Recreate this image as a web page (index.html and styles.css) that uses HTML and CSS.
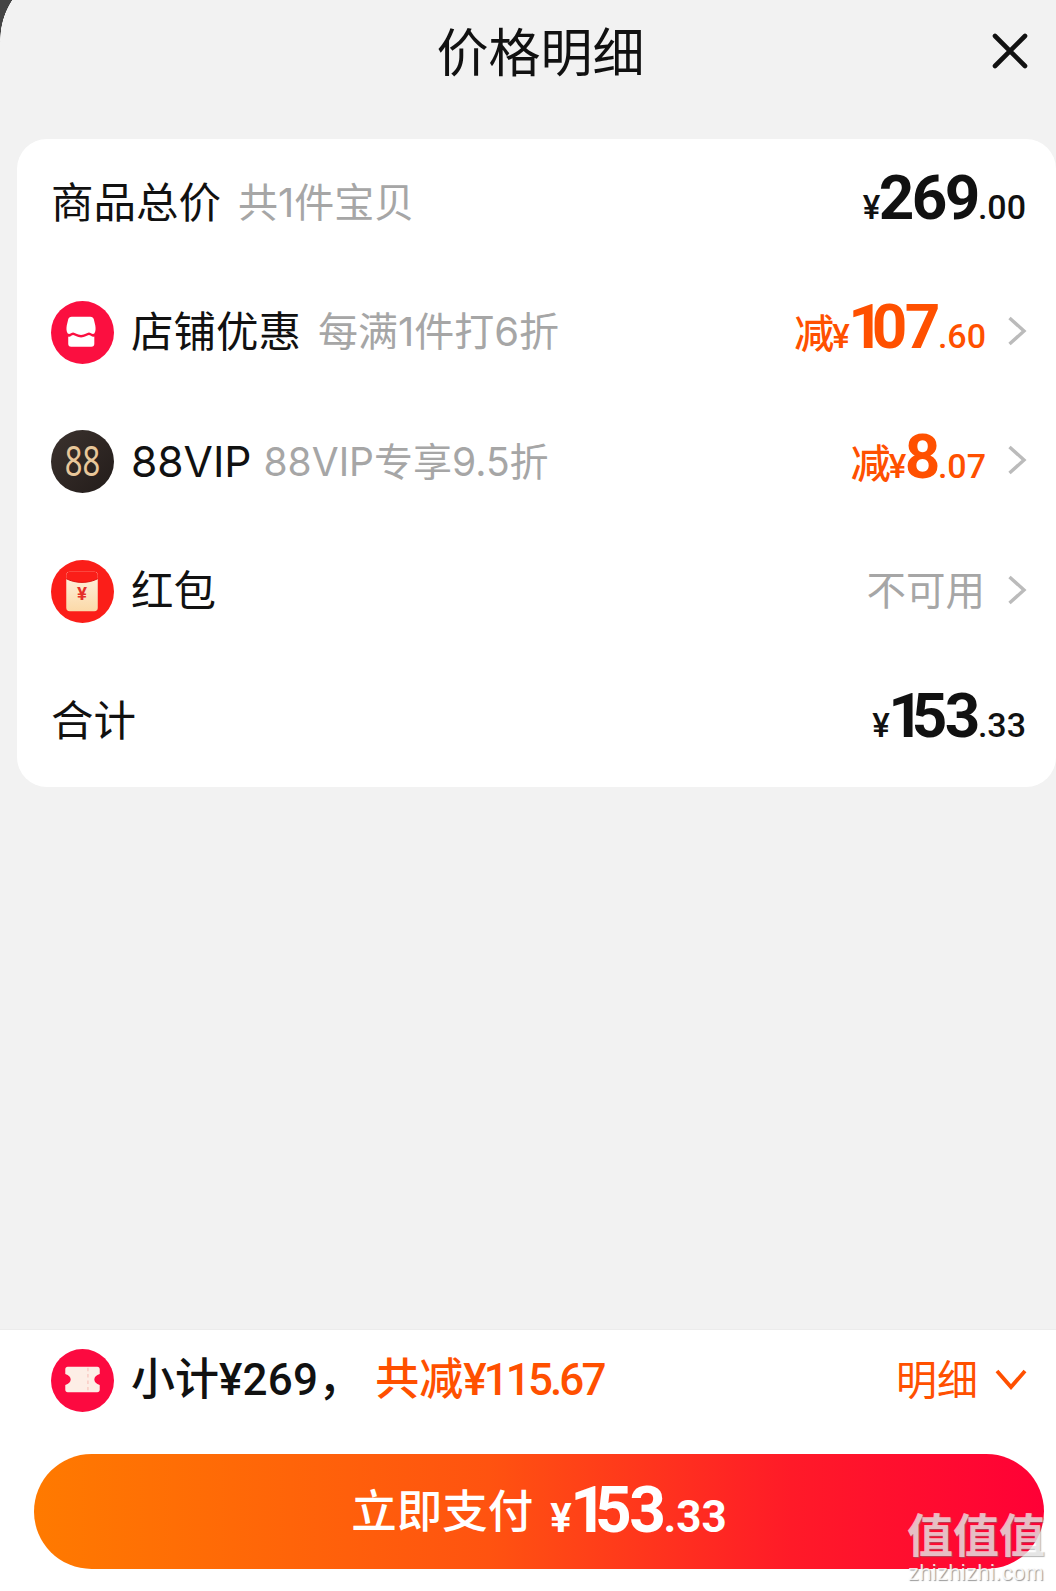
FILE: index.html
```html
<!DOCTYPE html>
<html lang="zh-CN">
<head>
    <meta charset="UTF-8">
    <meta name="viewport" content="width=device-width, initial-scale=1.0">
    <title>价格明细</title>
    <link rel="stylesheet" href="styles.css">
</head>
<body>
    <div class="sheet">
        <div class="corner"></div>

        <header class="header">
            <h1>价格明细</h1>
            <button class="close" aria-label="关闭">
                <svg width="36" height="36" viewBox="0 0 36 36"><path d="M3 3L33 33M33 3L3 33" fill="none" stroke="#111" stroke-width="4.6" stroke-linecap="round"/></svg>
            </button>
        </header>

        <main class="content">
            <section class="card">
                <div class="row">
                    <span class="name">商品总价</span>
                    <span class="note">共1件宝贝</span>
                    <span class="price"><span class="yen">¥</span><span class="int">269</span><span class="dec">.00</span></span>
                </div>

                <div class="row">
                    <svg class="icon" viewBox="0 0 64 64">
                        <circle cx="32" cy="32" r="32" fill="#fb0f40"/>
                        <path d="M21 16H40C42 16 43 17 43.500 18.500L45 25C45.500 28 45.500 31 44 33C42 34.500 40.500 32 38.500 32C36.500 32 34.500 34.500 30.500 34.500C26.500 34.500 24.500 32 22.500 32C20.500 32 19 34.500 17 33C15.500 31 15.500 28 16 25L17.500 18.500C18 17 19 16 21 16Z" fill="#fff"/>
                        <path d="M17.500 36C19.500 37 21 34.500 22.500 34.500C24.500 34.500 26.500 37 30.500 37C34.500 37 36.500 34.500 38.500 34.500C40 34.500 42 37 44 36V43.500C44 45.500 43 46.500 41 46.500H20.500C18.500 46.500 17.500 45.500 17.500 43.500Z" fill="#fff"/>
                    </svg>
                    <span class="name">店铺优惠</span>
                    <span class="note">每满1件打6折</span>
                    <span class="price price-off"><span class="off">减</span><span class="yen">¥</span><span class="int"><span class="one">1</span>07</span><span class="dec">.60</span></span>
                    <svg class="chevron" width="20" height="30" viewBox="0 0 20 30"><path d="M2.5 2L17 15L2.5 28" fill="none" stroke="#bbb" stroke-width="3.4"/></svg>
                </div>

                <div class="row">
                    <svg class="icon" viewBox="0 0 64 64">
                        <defs>
                            <linearGradient id="vipBg" x1="0" y1="0" x2="1" y2="1">
                                <stop offset="0" stop-color="#3b322e"/>
                                <stop offset="1" stop-color="#231c1a"/>
                            </linearGradient>
                        </defs>
                        <circle cx="32" cy="32" r="32" fill="url(#vipBg)"/>
                        <text class="vip-mark" x="14" y="47" textLength="36" lengthAdjust="spacingAndGlyphs">88</text>
                    </svg>
                    <span class="name">88VIP</span>
                    <span class="note note-vip">88VIP专享9.5折</span>
                    <span class="price price-off"><span class="off">减</span><span class="yen">¥</span><span class="int">8</span><span class="dec">.07</span></span>
                    <svg class="chevron" width="20" height="30" viewBox="0 0 20 30"><path d="M2.5 2L17 15L2.5 28" fill="none" stroke="#bbb" stroke-width="3.4"/></svg>
                </div>

                <div class="row">
                    <svg class="icon" viewBox="0 0 64 64">
                        <defs>
                            <linearGradient id="packetBg" x1="0" y1="0" x2="0" y2="1">
                                <stop offset="0" stop-color="#fff3e2"/>
                                <stop offset="1" stop-color="#fbd9a8"/>
                            </linearGradient>
                        </defs>
                        <circle cx="32" cy="32" r="32" fill="#fb1e19"/>
                        <rect x="15.500" y="12" width="32" height="40" rx="3.500" fill="url(#packetBg)"/>
                        <path d="M15.500 15.500C15.500 13.500 17 12 19 12H44C46 12 47.500 13.500 47.500 15.500V19C38 24 25 24 15.500 19Z" fill="#fb1e19"/>
                        <path d="M15.500 19C25 24 38 24 47.500 19" fill="none" stroke="#d9120f" stroke-width="1"/>
                        <text class="packet-yen" x="31.500" y="41" text-anchor="middle">¥</text>
                    </svg>
                    <span class="name">红包</span>
                    <span class="note-right">不可用</span>
                    <svg class="chevron" width="20" height="30" viewBox="0 0 20 30"><path d="M2.5 2L17 15L2.5 28" fill="none" stroke="#bbb" stroke-width="3.4"/></svg>
                </div>

                <div class="row">
                    <span class="name">合计</span>
                    <span class="price"><span class="yen">¥</span><span class="int"><span class="one">1</span>53</span><span class="dec">.33</span></span>
                </div>
            </section>
        </main>

        <footer class="footer">
            <div class="summary">
                <svg class="icon" viewBox="0 0 64 64">
                    <circle cx="32" cy="32" r="32" fill="#fc0a40"/>
                    <path d="M17 18H47C48.500 18 49.500 19 49.500 20.500V25.500C46 26.500 44 28.500 44 31C44 33.500 46 35.500 49.500 36.500V41.500C49.500 43 48.500 44 47 44H17C15.500 44 14.500 43 14.500 41.500V36.500C18 35.500 20 33.500 20 31C20 28.500 18 26.500 14.500 25.500V20.500C14.500 19 15.500 18 17 18Z" fill="#fdeee6"/>
                    <path d="M37.500 19V43" fill="none" stroke="#f9c9c0" stroke-width="1.400" stroke-dasharray="3.500 3"/>
                </svg>
                <span class="subtotal">小计<span class="amount">¥269</span>，</span>
                <span class="saved">共减<span class="amount">¥115.67</span></span>
                <span class="detail">明细</span>
                <svg class="chevron-down" width="32" height="22" viewBox="0 0 32 22"><path d="M2 2L16 18L30 2" fill="none" stroke="#ff5000" stroke-width="3.800"/></svg>
            </div>

            <button class="pay">
                <span class="pay-label">立即支付</span>
                <span class="pay-price"><span class="yen">¥</span><span class="int"><span class="one">1</span>53</span><span class="dec">.33</span></span>
            </button>
        </footer>

        <div class="watermark">
            <span class="wm-mark">值值值</span>
            <span class="wm-site">zhizhizhi.com</span>
        </div>
    </div>
</body>
</html>
```

FILE: styles.css
```css
* {
    margin: 0;
    padding: 0;
    box-sizing: border-box;
}

body {
    font-family: Inter, "Noto Sans CJK SC", sans-serif;
    background-color: #f2f2f2;
    color: #111;
}

button {
    font-family: inherit;
    border: none;
    background: none;
}

.sheet {
    position: relative;
    display: flex;
    flex-direction: column;
    width: 1056px;
    height: 1591px;
    overflow: hidden;
}

/* dark page peeking out behind the rounded sheet */
.corner {
    position: absolute;
    top: 0;
    left: 0;
    width: 14px;
    height: 42px;
    background: radial-gradient(circle 73px at 73px 40px, transparent 72.5px, #444 73px);
}

.header {
    position: relative;
    display: flex;
    align-items: center;
    justify-content: center;
    height: 102px;
    margin-bottom: 37px;
    padding-left: 25px;
}

.header h1 {
    font-size: 52px;
    font-weight: 400;
    line-height: 1;
    margin-top: 5px;
}

.close {
    position: absolute;
    top: 33px;
    right: 28px;
    width: 36px;
    height: 36px;
}

.content {
    flex: 1;
    padding-left: 17px;
}

.card {
    background-color: #fff;
    border-radius: 30px;
    height: 648px;
    display: flex;
    flex-direction: column;
}

.row {
    flex: 1;
    display: flex;
    align-items: center;
    padding: 0 30px 0 34px;
}

.icon {
    width: 63px;
    height: 63px;
    flex: none;
    margin: 0 17px 2px 0;
}

.name {
    font-size: 42.500px;
    line-height: 1;
    margin-bottom: 2px;
}

.note {
    font-size: 40px;
    line-height: 1;
    color: #a6a6a6;
    margin: 0 0 2px 17px;
}

.note-vip {
    font-size: 39px;
    margin-left: 12px;
}

.note-right {
    margin: 0 22px 2px auto;
    font-size: 39.500px;
    line-height: 1;
    color: #a6a6a6;
}

.price {
    margin: 0 0 12px auto;
    display: flex;
    align-items: baseline;
    font-family: Roboto, "Noto Sans CJK SC", sans-serif;
    font-weight: 700;
    line-height: 1;
}

.yen {
    font-size: 33px;
    font-weight: 500;
    letter-spacing: -1.500px;
}

.int {
    font-size: 62px;
    letter-spacing: -2.500px;
}

/* the screenshot's "1" is much narrower than Roboto's tabular one */
.one {
    letter-spacing: -12px;
}

.dec {
    font-size: 34px;
    font-weight: 500;
}

.price-off {
    color: #ff5000;
    margin-right: 21px;
}

.off {
    font-family: "Noto Sans CJK SC", sans-serif;
    font-size: 40px;
    font-weight: 500;
    letter-spacing: -2px;
}

.chevron {
    flex: none;
    width: 20px;
    height: 30px;
    margin: 0 -1px 5px 0;
}

.footer {
    height: 262px;
    background-color: #fff;
    border-top: 1px solid #ececec;
}

.summary {
    display: flex;
    align-items: center;
    height: 103px;
    padding: 0 29px 0 51px;
}

.summary .icon {
    margin-bottom: 2px;
}

.subtotal,
.saved {
    font-size: 44px;
    font-weight: 500;
    line-height: 1;
    margin-bottom: 4px;
}

.amount {
    font-family: Roboto, sans-serif;
    letter-spacing: 0.200px;
}

.saved {
    color: #ff5000;
    margin-left: 13px;
}

.saved .amount {
    letter-spacing: -2.900px;
}

.detail {
    margin: 0 0 2px auto;
    font-size: 41px;
    line-height: 1;
    color: #ff5000;
}

.chevron-down {
    flex: none;
    margin: 0 0 3px 17px;
}

.pay {
    display: flex;
    align-items: center;
    justify-content: center;
    width: 1010px;
    height: 115px;
    margin: 21px 0 0 34px;
    border-radius: 58px;
    color: #fff;
    background: linear-gradient(90deg, #ff7a00 0%, #ff5310 45%, #ff1a28 75%, #ff0036 100%);
}

.pay-label {
    font-size: 45.500px;
    font-weight: 500;
    line-height: 1;
}

.pay-price {
    display: flex;
    align-items: baseline;
    margin: 0 0 1px 17px;
    font-family: Roboto, "Noto Sans CJK SC", sans-serif;
    font-weight: 700;
    line-height: 1;
}

.pay-price .yen {
    font-size: 40px;
    font-weight: 700;
}

.pay-price .int {
    font-size: 64px;
}

.pay-price .dec {
    font-size: 44px;
    font-weight: 700;
}

.vip-mark {
    font-family: "Noto Sans", sans-serif;
    font-size: 43px;
    font-weight: 400;
    fill: #e8c79a;
}

.packet-yen {
    font-family: Roboto, sans-serif;
    font-size: 19px;
    font-weight: 700;
    fill: #e5302a;
}

.watermark {
    position: absolute;
    right: 10px;
    bottom: 7px;
    width: 140px;
    display: flex;
    flex-direction: column;
    align-items: center;
    pointer-events: none;
}

.wm-mark {
    font-size: 46px;
    font-weight: 700;
    line-height: 1;
    color: rgba(255, 255, 255, 0.68);
    text-shadow: 1px 1px 1px rgba(120, 120, 120, 0.55);
}

.wm-site {
    font-family: "Liberation Sans", sans-serif;
    font-size: 22px;
    line-height: 1;
    margin-top: 4px;
    letter-spacing: 0.300px;
    color: rgba(255, 255, 255, 0.85);
    text-shadow: 1px 1px 1px rgba(110, 110, 110, 0.7);
}
```
